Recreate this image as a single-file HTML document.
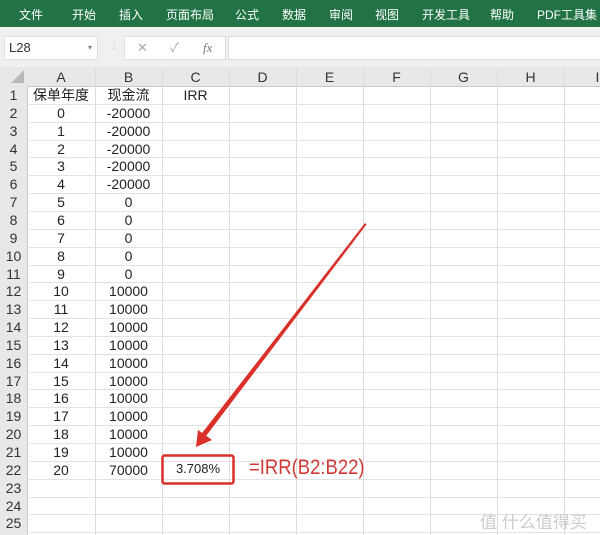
<!DOCTYPE html>
<html><head><meta charset="utf-8"><style>
body{margin:0;width:600px;height:535px;overflow:hidden;background:#fff;font-family:"Liberation Sans","Noto Sans CJK SC",sans-serif;position:relative}
.a{position:absolute}
.menu{top:0;left:0;width:600px;height:27px;background:#217346;color:#fff;font-size:12px}
.menu span{position:absolute;top:6px}
.c{position:absolute;font-size:14px;color:#222;text-align:center;line-height:18px}
</style></head><body>
<div class="a menu">
<span style="left:19px">文件</span><span style="left:72px">开始</span><span style="left:119px">插入</span><span style="left:166px">页面布局</span><span style="left:235px">公式</span><span style="left:282px">数据</span><span style="left:329px">审阅</span><span style="left:375px">视图</span><span style="left:422px">开发工具</span><span style="left:490px">帮助</span><span style="left:537px">PDF工具集</span>
</div>
<div class="a" style="top:27px;left:0;width:600px;height:41px;background:#f0f0f0"></div>
<div class="a" style="top:36px;left:4px;width:92px;height:22px;background:#fff;border:1px solid #ddd;font-size:13px;line-height:22px;color:#333"><span style="margin-left:4px">L28</span><span style="position:absolute;right:5px;font-size:8px;color:#888">▾</span></div>
<div class="a" style="top:40px;left:109px;color:#bbb;font-size:10px">⋮</div>
<div class="a" style="top:36px;left:124px;width:100px;height:22px;background:#fff;border:1px solid #ddd;color:#aaa;font-size:13px;line-height:22px"><span style="position:absolute;left:12px">✕</span><span style="position:absolute;left:45px">✓</span><span style="position:absolute;left:78px;font-family:'Liberation Serif';font-style:italic;color:#777">fx</span></div>
<div class="a" style="top:36px;left:228px;width:372px;height:22px;background:#fff;border:1px solid #ddd"></div>
<div class="a" style="top:67px;left:0;width:600px;height:19px;background:#e8e8e8;border-bottom:1px solid #c8c8c8"></div>
<div class="a" style="top:86px;left:0;width:27px;height:449px;background:#e8e8e8;border-right:1px solid #c8c8c8"></div>
<svg class="a" style="top:0;left:0" width="600" height="535">
<polygon points="11,83 24,83 24,70" fill="#b8b8b8"/>
<g stroke="#dcdcdc" stroke-width="1">
<line x1="95.5" y1="68" x2="95.5" y2="535"/><line x1="162.5" y1="68" x2="162.5" y2="535"/><line x1="229.5" y1="68" x2="229.5" y2="535"/><line x1="296.5" y1="68" x2="296.5" y2="535"/><line x1="363.5" y1="68" x2="363.5" y2="535"/><line x1="430.5" y1="68" x2="430.5" y2="535"/><line x1="497.5" y1="68" x2="497.5" y2="535"/><line x1="564.5" y1="68" x2="564.5" y2="535"/>
</g>
</svg>
<div id="g"></div>
<svg class="a" style="top:0;left:0" width="600" height="535">
<polygon points="365,223 366.5,224.5 203,440 199,437" fill="#d9302a"/>
<polygon points="196,447 198,430 212,440" fill="#d9302a"/>
<rect x="162.5" y="455.5" width="71" height="28" fill="none" stroke="#d9302a" stroke-width="2.5" rx="2"/>
</svg>
<div class="a" style="top:456px;left:249px;font-size:21px;color:#d03a36;transform:scaleX(0.88);transform-origin:left">=IRR(B2:B22)</div>
<div class="a" style="top:508px;left:480px;font-size:17px;color:#ccc">值 什么值得买</div>
<script>
var cols=["A","B","C","D","E","F","G","H","I"],xs=[27,95,162,229,296,363,430,497,564,631],h="";
for(var i=0;i<9;i++)h+='<div class="c" style="top:68px;left:'+xs[i]+'px;width:'+(xs[i+1]-xs[i])+'px;color:#333">'+cols[i]+'</div>';
var A=["保单年度"],B=["现金流"];for(var y=0;y<=20;y++){A.push(""+y);B.push(y<5?"-20000":y<10?"0":y<20?"10000":"70000");}
var lines="";
for(var r=1;r<=25;r++){var t=86+(r-1)*17.85;
h+='<div class="c" style="top:'+t+'px;left:0;width:27px;color:#333">'+r+'</div>';
if(r<=22){h+='<div class="c" style="top:'+t+'px;left:27px;width:68px">'+A[r-1]+'</div><div class="c" style="top:'+t+'px;left:95px;width:67px">'+B[r-1]+'</div>';}
lines+='<div class="a" style="top:'+Math.round(t+17.85)+'px;left:27px;width:573px;height:1px;background:#e2e2e2"></div>';}
h+='<div class="c" style="top:86px;left:162px;width:67px">IRR</div><div class="c" style="top:460px;left:162px;width:72px;font-size:13px">3.708%</div>';
document.getElementById("g").innerHTML=lines+h;
</script>
</body></html>
